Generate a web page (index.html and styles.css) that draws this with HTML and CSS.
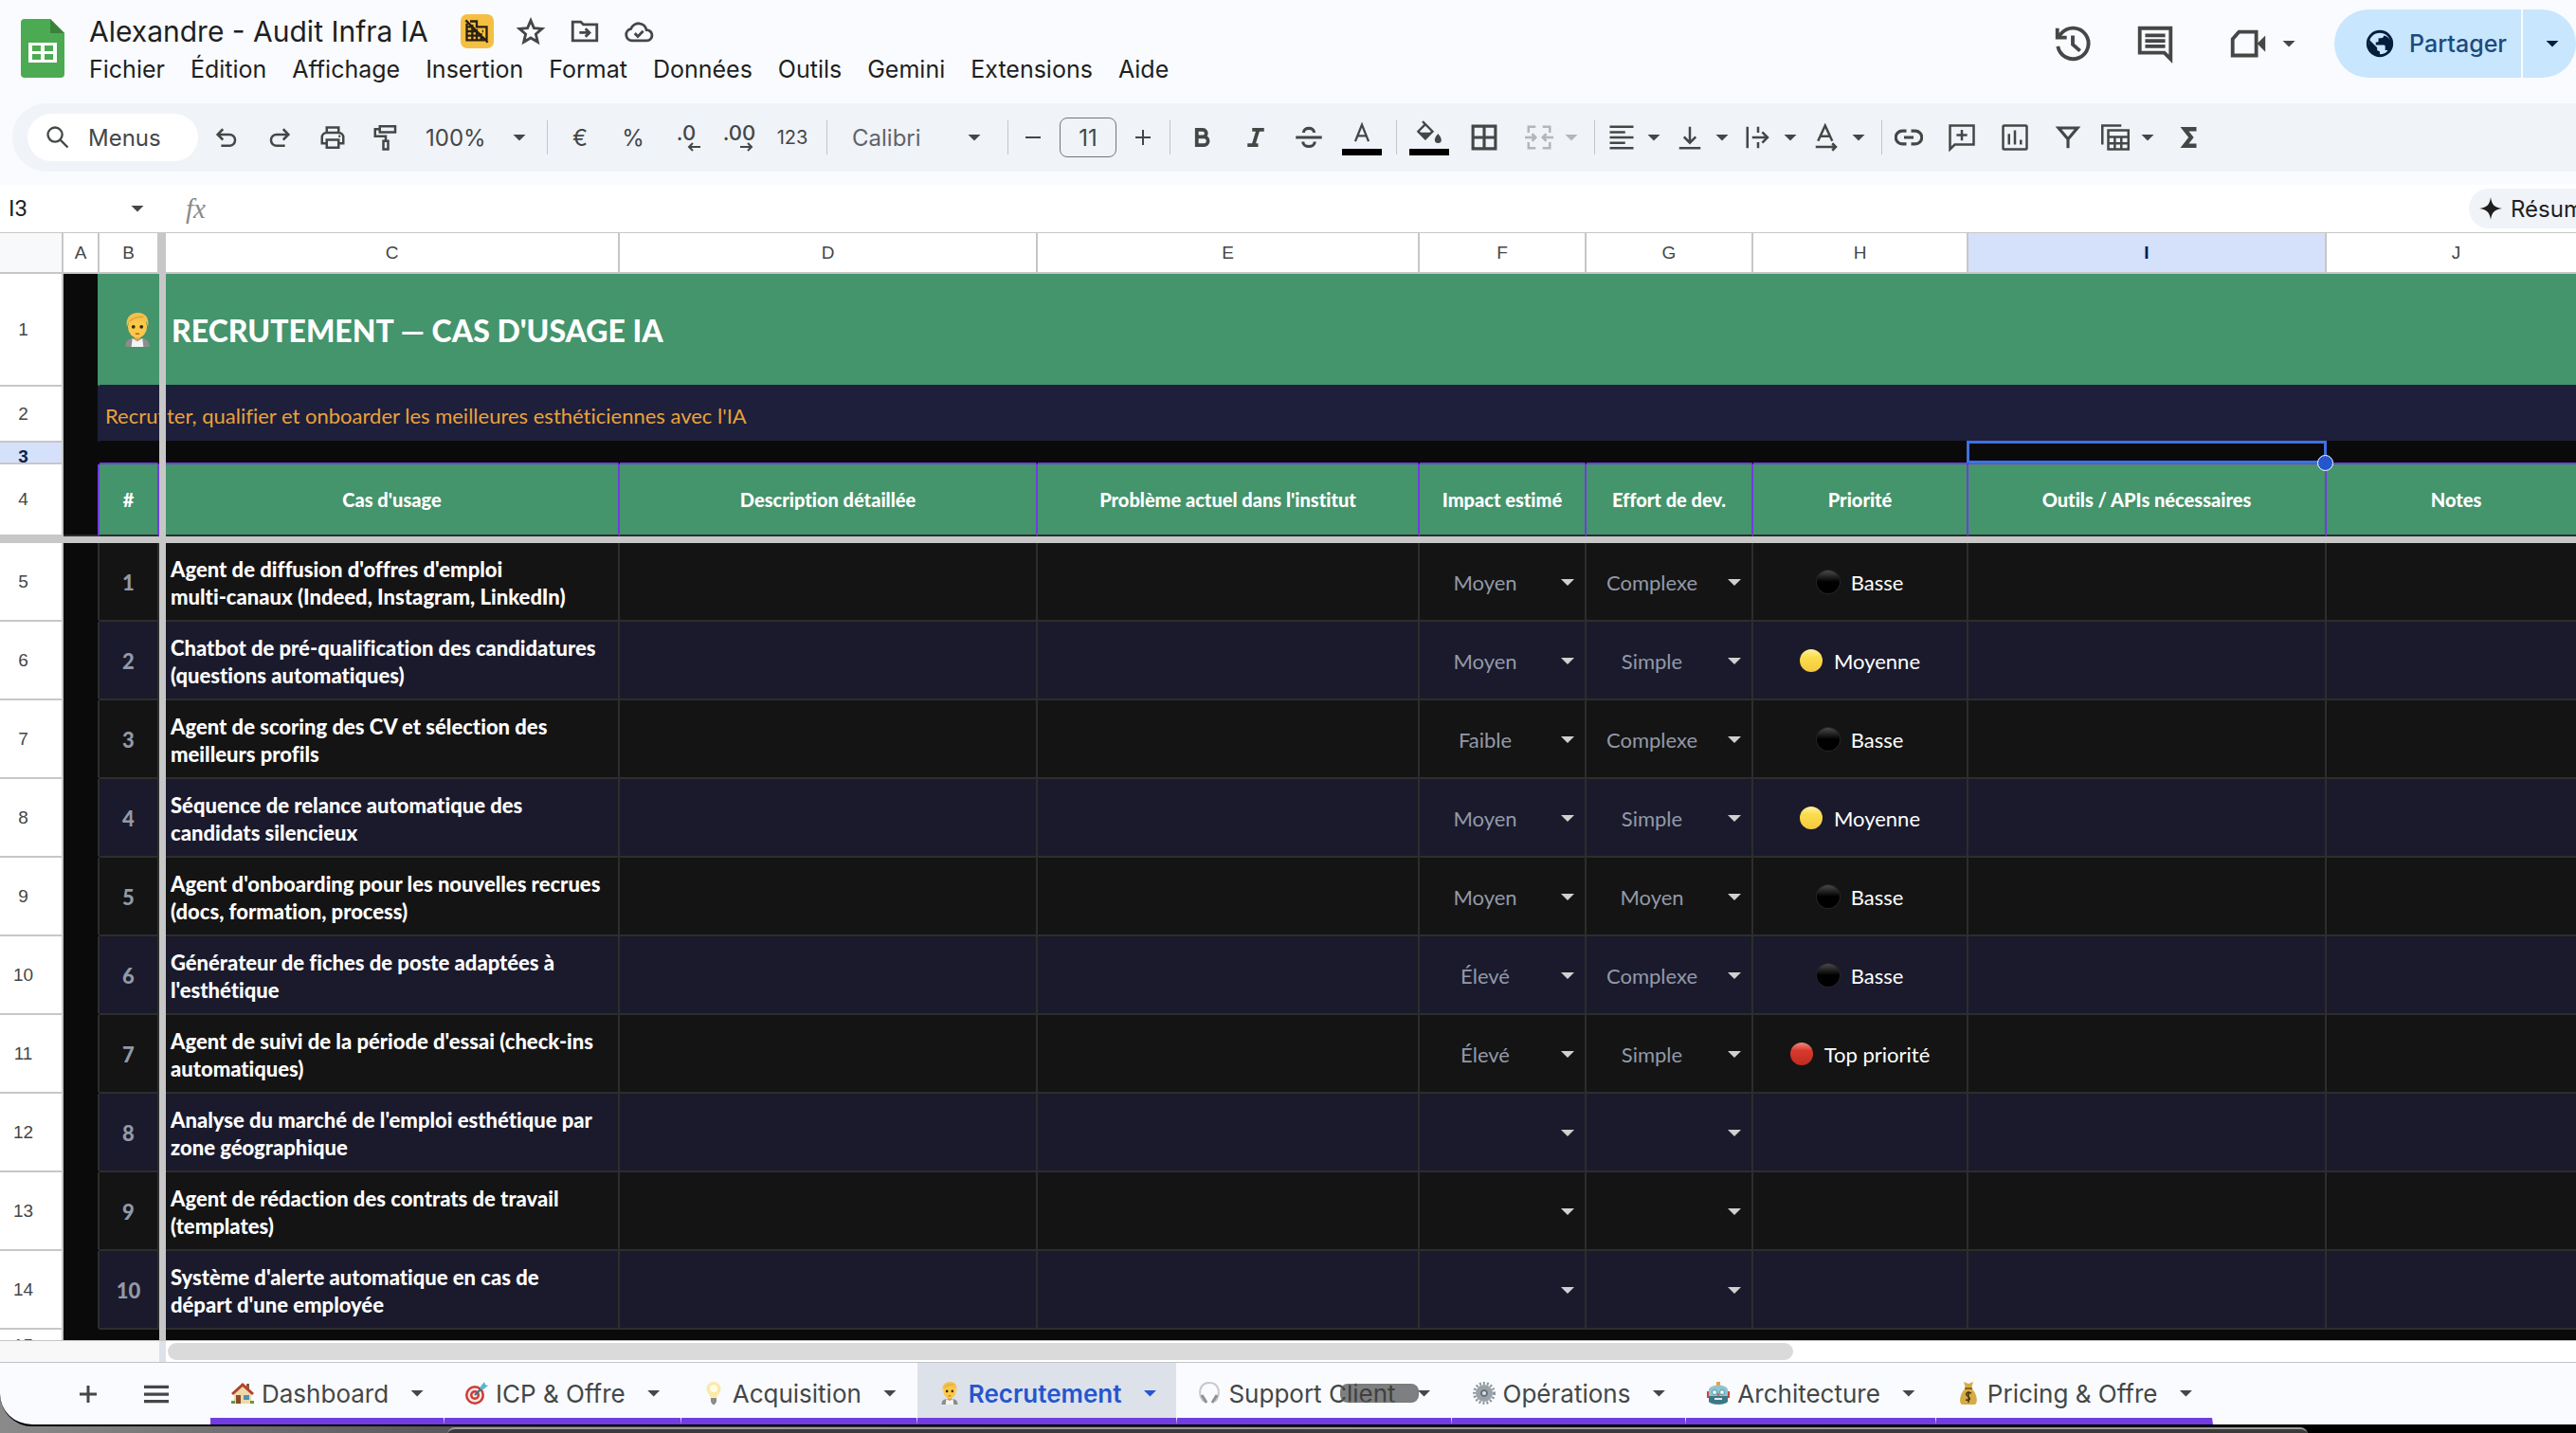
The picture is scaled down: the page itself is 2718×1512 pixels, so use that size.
FILE: index.html
```html
<!DOCTYPE html>
<html lang="fr">
<head>
  <title>Alexandre - Audit Infra IA</title>
  <meta charset="utf-8" />
  <meta name="viewport" content="width=device-width, initial-scale=1.0" />
  <link rel="stylesheet" href="styles.css">
</head>
<body>

<!-- Shared icons -->
<svg class="sprite" aria-hidden="true">
  <symbol id="person" viewBox="0 0 26 34">
    <path d="M1 34c0-6 3-8 8-8.500h8c5 .5 8 2.500 8 8.500z" fill="#8d8d8d"/>
    <path d="M8 25.500l5 3 5-3 1 8.500H7z" fill="#f4f4f4"/>
    <path d="M10 22h6v4l-3 2-3-2z" fill="#e0a23a"/>
    <ellipse cx="13" cy="14" rx="9.500" ry="11" fill="#fbc84a"/>
    <path d="M2.500 14C1 5 6 0 13.500 0 21 0 25 5 23.500 14l-1.500-5c-4 0-7-1-9-3-2 2-5 3-8.500 3z" fill="#f2c14e"/>
    <path d="M5 9c3-4 8-5 14-5" fill="none" stroke="#d99a2b"/>
    <circle cx="9" cy="14" r="1.800" fill="#3a2a1c"/>
    <circle cx="17" cy="14" r="1.800" fill="#3a2a1c"/>
    <path d="M11 21h4" stroke="#b8642a" stroke-width="1.500"/>
  </symbol>
</svg>

<div class="window">

  <header class="header">
    <svg class="logo" viewBox="0 0 46 62">
      <path d="M4 0h27l15 15v43a4 4 0 0 1-4 4H4a4 4 0 0 1-4-4V4a4 4 0 0 1 4-4z" fill="#4caa53"/>
      <path d="M31 0l15 15H31z" fill="#3a8139"/>
      <path d="M8 25h30v21H8z" fill="#fff"/>
      <path d="M12 28h9v6h-9zm13 0h9v6h-9zM12 37h9v6h-9zm13 0h9v6h-9z" fill="#4caa53"/>
    </svg>
    <div class="heading">
      <div class="title-row">
        <h1>Alexandre - Audit Infra IA</h1>
        <button class="badge" aria-label="Externe">
          <svg viewBox="0 0 24 24" width="28" height="28" fill="none" stroke="#2a2111" stroke-width="2"><path d="M3 5v15h16M6 3h6v5h9v12M3 8h5M3 12h9M3 16h14M8 6v14M12 10v10M16 14v6M17 12h1M2 2l20 20"/></svg>
        </button>
        <button class="icon" aria-label="Suivre">
          <svg viewBox="0 0 24 24" width="34" height="34"><path d="M12 4l2.400 5.600 6 .5-4.600 4 1.400 5.900L12 16.900 6.800 20l1.400-5.900-4.600-4 6-.5z"/></svg>
        </button>
        <button class="icon" aria-label="Déplacer">
          <svg viewBox="0 0 24 24" width="34" height="34"><path d="M3 5h6l2 2h10v12H3zM8 13h7M12.500 10l3 3-3 3"/></svg>
        </button>
        <button class="icon" aria-label="Enregistré">
          <svg viewBox="0 0 24 24" width="34" height="34"><path d="M7 19a4.500 4.500 0 0 1-.8-8.900A6 6 0 0 1 17.700 11 4 4 0 0 1 18 19zM9 13.500l2.300 2.300 4-4"/></svg>
        </button>
      </div>
      <nav class="menus">
        <a href="#">Fichier</a>
        <a href="#">Édition</a>
        <a href="#">Affichage</a>
        <a href="#">Insertion</a>
        <a href="#">Format</a>
        <a href="#">Données</a>
        <a href="#">Outils</a>
        <a href="#">Gemini</a>
        <a href="#">Extensions</a>
        <a href="#">Aide</a>
      </nav>
    </div>
    <div class="actions">
      <button class="icon" aria-label="Historique">
        <svg viewBox="0 0 24 24" width="46" height="46"><path d="M3.800 13.500a8.500 8.500 0 1 0 2-7.200L3.500 8.500M3.500 3.500v5.200h5.200M12 7.500v5l4 3.500"/></svg>
      </button>
      <button class="icon" aria-label="Commentaires">
        <svg viewBox="0 0 24 24" width="46" height="46"><path d="M3.500 3.500h17v17l-3.500-3.500H3.500zM6.500 7.500h11M6.500 10.500h11M6.500 13.500h11"/></svg>
      </button>
      <button class="icon meet" aria-label="Meet">
        <svg viewBox="0 0 24 24" width="46" height="46"><path d="M7 5.500h9.500v13H3.500V9.500z"/><path d="M17 12l4.500-4.500v9z" fill="#444746" stroke="none"/></svg>
        <i class="caret"></i>
      </button>
      <div class="share">
        <button class="share-main">
          <svg viewBox="0 0 24 24" width="34" height="34"><circle cx="12" cy="12" r="9" fill="none" stroke="#041e3c" stroke-width="2"/><path d="M4 9l6 6v2l2 1v3c-5 0-9-4-8-12zM15 4v2c0 1-1 2-2 2h-2v2c0 1-1 1-2 1v2h6c1 0 1 1 1 1v3h1c1 0 2 1 2 2 3-4 3-11-4-13z" fill="#041e3c"/></svg>
          Partager
        </button>
        <button class="share-more" aria-label="Options de partage"><i class="caret"></i></button>
      </div>
    </div>
  </header>

  <div class="toolbar">
    <label class="search">
      <svg viewBox="0 0 24 24" width="28" height="28"><circle cx="9.500" cy="9.500" r="6.500"/><path d="M14.500 14.500L21 21"/></svg>
      <input type="text" placeholder="Menus">
    </label>

    <div class="group">
      <button class="tool" aria-label="Annuler"><svg viewBox="0 0 24 24"><path d="M7.500 19h7a4.700 4.700 0 0 0 0-9.500H5M9 5L4.500 9.500 9 14"/></svg></button>
      <button class="tool" aria-label="Rétablir"><svg viewBox="0 0 24 24"><path d="M16.500 19h-7a4.700 4.700 0 0 1 0-9.500H19M15 5l4.500 4.500L15 14"/></svg></button>
      <button class="tool" aria-label="Imprimer"><svg viewBox="0 0 24 24"><path d="M7 8V3.500h10V8M7 17H3v-5a4 4 0 0 1 4-4h10a4 4 0 0 1 4 4v5h-4M7 14h10v6.500H7zM17 11h1.500"/></svg></button>
      <button class="tool" aria-label="Copier la mise en forme"><svg viewBox="0 0 24 24"><path d="M7 2.500h13v5H7zM7 5H3v6h9v4M10 15h4v7h-4z"/></svg></button>
      <button class="zoom">100% <i class="caret"></i></button>
    </div>

    <div class="group">
      <button class="tool">€</button>
      <button class="tool">%</button>
      <button class="tool decimals"><b>.0</b><svg viewBox="0 0 14 10"><path d="M14 5H2M6 1L2 5l4 4"/></svg></button>
      <button class="tool decimals"><b>.00</b><svg viewBox="0 0 14 10"><path d="M0 5h12M8 1l4 4-4 4"/></svg></button>
      <button class="tool formats">123</button>
    </div>

    <div class="group">
      <button class="font">Calibri <i class="caret"></i></button>
    </div>

    <div class="group size">
      <button class="step" aria-label="Réduire"><svg viewBox="0 0 24 24"><path d="M4 12h16"/></svg></button>
      <input type="text" value="11" aria-label="Taille de police">
      <button class="step" aria-label="Augmenter"><svg viewBox="0 0 24 24"><path d="M4 12h16M12 4v16"/></svg></button>
    </div>

    <div class="group">
      <button class="tool" aria-label="Gras"><svg viewBox="0 0 24 24"><path d="M7 5.500h5a3 3 0 0 1 0 6H7zM7 11.500h6a3.500 3.500 0 0 1 0 7H7z" stroke-width="3"/></svg></button>
      <button class="tool" aria-label="Italique"><svg viewBox="0 0 24 24"><path d="M9 5.500h10M5 18.500h9M14 5.500l-4 13" stroke-width="3"/></svg></button>
      <button class="tool" aria-label="Barré"><svg viewBox="0 0 24 24"><path d="M1 12h22M7.500 8c0-5 9-5 9 0M7 15.500c0 5.500 10 5.500 10 0" stroke-width="2.500"/></svg></button>
      <button class="tool swatch" aria-label="Couleur du texte"><svg viewBox="0 0 24 24"><path d="M6 19L12 4l6 15M8 14h8"/></svg></button>
    </div>

    <div class="group">
      <button class="tool swatch" aria-label="Remplissage"><svg viewBox="0 0 24 24"><path d="M6 1l9 9-6.500 6.500L2 10l6.500-6.500"/><path d="M2 11h13l-6.500 6.500zM20 12s3 3.500 3 5.500a3 3 0 0 1-6 0c0-2 3-5.500 3-5.500z" fill="#444746" stroke="none"/></svg></button>
      <button class="tool" aria-label="Bordures"><svg viewBox="0 0 24 24"><path d="M2.500 2.500h19v19h-19zM12 2.500v19M2.500 12h19" stroke-width="2.500"/></svg></button>
      <button class="split merge" aria-label="Fusionner"><svg viewBox="0 0 24 24"><path d="M9 3H3v5M15 3h6v5M9 21H3v-5M15 21h6v-5M0 12h9M6 9l3 3-3 3M24 12h-9M18 9l-3 3 3 3"/></svg><i class="caret"></i></button>
    </div>

    <div class="group">
      <button class="split" aria-label="Alignement horizontal"><svg viewBox="0 0 24 24"><path d="M2 3h20M2 7.500h13M2 12h20M2 16.500h13M2 21h20"/></svg><i class="caret"></i></button>
      <button class="split" aria-label="Alignement vertical"><svg viewBox="0 0 24 24"><path d="M3 21h18M12 3v13M7 11.500l5 5 5-5"/></svg><i class="caret"></i></button>
      <button class="split" aria-label="Retour à la ligne"><svg viewBox="0 0 24 24"><path d="M3 3v18M12 3v5M12 16v5M7 12h13M15.500 7.500L20 12l-4.500 4.500"/></svg><i class="caret"></i></button>
      <button class="split" aria-label="Rotation"><svg viewBox="0 0 24 24"><path d="M5 15L11 2l6 13M7 11h8M3 20h17M17 17l3 3-3 3"/></svg><i class="caret"></i></button>
    </div>

    <div class="group last">
      <button class="tool" aria-label="Lien"><svg viewBox="0 0 24 24"><path d="M10 6.500H6.500a5.500 5.500 0 0 0 0 11H10M14 6.500h3.500a5.500 5.500 0 0 1 0 11H14M8 12h8" stroke-width="2.500"/></svg></button>
      <button class="tool" aria-label="Commentaire"><svg viewBox="0 0 24 24"><path d="M2 22V2h20v16H6zM12 5.500v9M7.500 10h9"/></svg></button>
      <button class="tool" aria-label="Graphique"><svg viewBox="0 0 24 24"><rect x="2" y="2" width="20" height="20" rx="1"/><path d="M7 9v9M12 6v12M17 14v4"/></svg></button>
      <button class="tool" aria-label="Filtre"><svg viewBox="0 0 24 24"><path d="M4 4h16l-8 9.500zM12 12v9" stroke-width="2.500"/></svg></button>
      <button class="split" aria-label="Tableaux"><svg viewBox="0 0 24 24"><path d="M1 18V2h16M6 6h17v16H6zM6 11.500h17M6 17h17M11.500 11.500V22M17 11.500V22"/></svg><i class="caret"></i></button>
      <button class="tool" aria-label="Fonctions"><svg viewBox="0 0 24 24"><path d="M18 5H8l5.500 7L8 19h10" stroke-width="3.500"/></svg></button>
    </div>
  </div>

  <div class="formula-bar">
    <button class="cell-name">I3 <i class="caret"></i></button>
    <span class="fx">fx</span>
    <input type="text" class="formula" aria-label="Formule">
    <button class="summary"><svg viewBox="0 0 24 24" width="24" height="24"><path d="M12 0c1 8 4 11 12 12-8 1-11 4-12 12-1-8-4-11-12-12 8-1 11-4 12-12z" fill="#1f1f1f"/></svg>Résumer</button>
  </div>

  <main class="grid">
    <table>
      <colgroup>
        <col class="w-head"><col class="w-a"><col class="w-b"><col class="w-c"><col class="w-d"><col class="w-e">
        <col class="w-f"><col class="w-f"><col class="w-h"><col class="w-i"><col class="w-j">
      </colgroup>
      <thead>
        <tr class="letters">
          <th class="corner"></th><th>A</th><th>B</th><th class="c">C</th><th>D</th><th>E</th><th>F</th><th>G</th><th>H</th><th class="active">I</th><th>J</th>
        </tr>
      </thead>
      <tbody>
        <tr class="banner">
          <th>1</th><td class="a"></td>
          <td class="emoji"><svg width="28" height="36"><use href="#person"/></svg></td>
          <td colspan="8" class="banner-text">RECRUTEMENT — CAS D'USAGE IA</td>
        </tr>
        <tr class="subtitle">
          <th>2</th><td class="a"></td>
          <td>Recrut</td>
          <td colspan="8" class="rest">ter, qualifier et onboarder les meilleures esthéticiennes avec l'IA</td>
        </tr>
        <tr class="spacer">
          <th class="active">3</th><td class="a"></td><td></td><td></td><td></td><td></td><td></td><td></td><td></td>
          <td class="selected"><div class="selection"><i></i></div></td><td></td>
        </tr>
        <tr class="labels">
          <th>4</th><td class="a"></td>
          <td>#</td><td class="c">Cas d'usage</td><td>Description détaillée</td><td>Problème actuel dans l'institut</td><td>Impact estimé</td><td>Effort de dev.</td><td>Priorité</td><td>Outils / APIs nécessaires</td><td>Notes</td>
        </tr>
        <tr class="freeze-row"><td colspan="11"></td></tr>

        <tr class="row">
          <th>5</th><td class="a"></td><td class="num">1</td>
          <td class="case">Agent de diffusion d'offres d'emploi<br>multi-canaux (Indeed, Instagram, LinkedIn)</td><td></td><td></td>
          <td><div class="pick"><select aria-label="Impact 1"><option>Moyen</option><option>Faible</option><option>Élevé</option></select><i class="caret"></i></div></td>
          <td><div class="pick"><select aria-label="Effort 1"><option>Complexe</option><option>Moyen</option><option>Simple</option></select><i class="caret"></i></div></td>
          <td class="prio"><i class="dot low"></i>Basse</td><td></td><td></td>
        </tr>
        <tr class="row alt">
          <th>6</th><td class="a"></td><td class="num">2</td>
          <td class="case">Chatbot de pré-qualification des candidatures<br>(questions automatiques)</td><td></td><td></td>
          <td><div class="pick"><select aria-label="Impact 2"><option>Moyen</option><option>Faible</option><option>Élevé</option></select><i class="caret"></i></div></td>
          <td><div class="pick"><select aria-label="Effort 2"><option>Simple</option><option>Moyen</option><option>Complexe</option></select><i class="caret"></i></div></td>
          <td class="prio"><i class="dot mid"></i>Moyenne</td><td></td><td></td>
        </tr>
        <tr class="row">
          <th>7</th><td class="a"></td><td class="num">3</td>
          <td class="case">Agent de scoring des CV et sélection des<br>meilleurs profils</td><td></td><td></td>
          <td><div class="pick"><select aria-label="Impact 3"><option>Faible</option><option>Moyen</option><option>Élevé</option></select><i class="caret"></i></div></td>
          <td><div class="pick"><select aria-label="Effort 3"><option>Complexe</option><option>Moyen</option><option>Simple</option></select><i class="caret"></i></div></td>
          <td class="prio"><i class="dot low"></i>Basse</td><td></td><td></td>
        </tr>
        <tr class="row alt">
          <th>8</th><td class="a"></td><td class="num">4</td>
          <td class="case">Séquence de relance automatique des<br>candidats silencieux</td><td></td><td></td>
          <td><div class="pick"><select aria-label="Impact 4"><option>Moyen</option><option>Faible</option><option>Élevé</option></select><i class="caret"></i></div></td>
          <td><div class="pick"><select aria-label="Effort 4"><option>Simple</option><option>Moyen</option><option>Complexe</option></select><i class="caret"></i></div></td>
          <td class="prio"><i class="dot mid"></i>Moyenne</td><td></td><td></td>
        </tr>
        <tr class="row">
          <th>9</th><td class="a"></td><td class="num">5</td>
          <td class="case">Agent d'onboarding pour les nouvelles recrues<br>(docs, formation, process)</td><td></td><td></td>
          <td><div class="pick"><select aria-label="Impact 5"><option>Moyen</option><option>Faible</option><option>Élevé</option></select><i class="caret"></i></div></td>
          <td><div class="pick"><select aria-label="Effort 5"><option>Moyen</option><option>Simple</option><option>Complexe</option></select><i class="caret"></i></div></td>
          <td class="prio"><i class="dot low"></i>Basse</td><td></td><td></td>
        </tr>
        <tr class="row alt">
          <th>10</th><td class="a"></td><td class="num">6</td>
          <td class="case">Générateur de fiches de poste adaptées à<br>l'esthétique</td><td></td><td></td>
          <td><div class="pick"><select aria-label="Impact 6"><option>Élevé</option><option>Moyen</option><option>Faible</option></select><i class="caret"></i></div></td>
          <td><div class="pick"><select aria-label="Effort 6"><option>Complexe</option><option>Moyen</option><option>Simple</option></select><i class="caret"></i></div></td>
          <td class="prio"><i class="dot low"></i>Basse</td><td></td><td></td>
        </tr>
        <tr class="row">
          <th>11</th><td class="a"></td><td class="num">7</td>
          <td class="case">Agent de suivi de la période d'essai (check-ins<br>automatiques)</td><td></td><td></td>
          <td><div class="pick"><select aria-label="Impact 7"><option>Élevé</option><option>Moyen</option><option>Faible</option></select><i class="caret"></i></div></td>
          <td><div class="pick"><select aria-label="Effort 7"><option>Simple</option><option>Moyen</option><option>Complexe</option></select><i class="caret"></i></div></td>
          <td class="prio"><i class="dot top"></i>Top priorité</td><td></td><td></td>
        </tr>
        <tr class="row alt">
          <th>12</th><td class="a"></td><td class="num">8</td>
          <td class="case">Analyse du marché de l'emploi esthétique par<br>zone géographique</td><td></td><td></td>
          <td><div class="pick"><select aria-label="Impact 8"><option></option><option>Moyen</option></select><i class="caret"></i></div></td>
          <td><div class="pick"><select aria-label="Effort 8"><option></option><option>Moyen</option></select><i class="caret"></i></div></td>
          <td></td><td></td><td></td>
        </tr>
        <tr class="row">
          <th>13</th><td class="a"></td><td class="num">9</td>
          <td class="case">Agent de rédaction des contrats de travail<br>(templates)</td><td></td><td></td>
          <td><div class="pick"><select aria-label="Impact 9"><option></option><option>Moyen</option></select><i class="caret"></i></div></td>
          <td><div class="pick"><select aria-label="Effort 9"><option></option><option>Moyen</option></select><i class="caret"></i></div></td>
          <td></td><td></td><td></td>
        </tr>
        <tr class="row alt">
          <th>14</th><td class="a"></td><td class="num">10</td>
          <td class="case">Système d'alerte automatique en cas de<br>départ d'une employée</td><td></td><td></td>
          <td><div class="pick"><select aria-label="Impact 10"><option></option><option>Moyen</option></select><i class="caret"></i></div></td>
          <td><div class="pick"><select aria-label="Effort 10"><option></option><option>Moyen</option></select><i class="caret"></i></div></td>
          <td></td><td></td><td></td>
        </tr>
        <tr class="tail"><th>15</th><td class="a" colspan="10"></td></tr>
      </tbody>
    </table>
    <div class="freeze-col"></div>
  </main>

  <div class="scrollbar">
    <div class="scroll-head"></div>
    <div class="scroll-track"><div class="thumb"></div></div>
  </div>

  <footer class="tabs">
    <button class="tab-tool" aria-label="Ajouter"><svg viewBox="0 0 24 24" width="24" height="24"><path d="M3 12h18M12 3v18"/></svg></button>
    <button class="tab-tool" aria-label="Toutes les feuilles"><svg viewBox="0 0 24 24" width="26" height="26"><path d="M0 5h24M0 12h24M0 19h24"/></svg></button>
    <div class="tab-list">
      <button class="tab">
        <svg viewBox="0 0 24 24"><path d="M3 12v11h18V12l-9-8z" fill="#eed9a6"/><path d="M16 2h3v6l-3-3z" fill="#8b5a3c"/><path d="M0 12L12 1l12 11-2 2L12 5 2 14z" fill="#b5402f"/><path d="M5 14h5v9H5z" fill="#8a4b2a"/><path d="M13 14h6v5h-6z" fill="#4f8fc4"/><path d="M0 20h4v3H0zM20 20h4v3h-4z" fill="#5d9b45"/></svg>
        Dashboard <i class="caret"></i>
      </button>
      <button class="tab">
        <svg viewBox="0 0 24 24"><circle cx="10" cy="14" r="10" fill="#cf3b35"/><circle cx="10" cy="14" r="7.500" fill="#f3e8e4"/><circle cx="10" cy="14" r="5" fill="#cf3b35"/><circle cx="10" cy="14" r="2.500" fill="#f3e8e4"/><path d="M10 14l9-9" stroke="#3f6f86" stroke-width="2"/><path d="M16 5l4-5 1 3 3 1-5 4-3 0z" fill="#58b5cf"/></svg>
        ICP &amp; Offre <i class="caret"></i>
      </button>
      <button class="tab">
        <svg viewBox="0 0 24 24"><path d="M12 0a7.500 7.500 0 0 1 7.500 7.500c0 4-3.500 5-4 9h-7c-.5-4-4-5-4-9A7.500 7.500 0 0 1 12 0z" fill="#fbe9a6"/><circle cx="12" cy="7" r="4" fill="#fffbe6"/><path d="M9 17h6v4l-2 3h-2l-2-3z" fill="#8b8b8b"/></svg>
        Acquisition <i class="caret"></i>
      </button>
      <button class="tab current">
        <svg><use href="#person"/></svg>
        Recrutement <i class="caret"></i>
      </button>
      <button class="tab marked">
        <svg viewBox="0 0 24 24" fill="none"><path d="M6 21C-1 12 2 1 12 1s13 11 6 20" stroke="#c9c9cb" stroke-width="2"/><path d="M4 14l5 8M20 14l-5 8" stroke="#8f9093" stroke-width="3"/></svg>
        Support Client <i class="caret"></i>
      </button>
      <button class="tab">
        <svg viewBox="0 0 24 24" fill="none"><circle cx="12" cy="12" r="10.500" stroke="#8f979e" stroke-width="3" stroke-dasharray="2 2"/><circle cx="12" cy="12" r="6.500" fill="#c3c9ce" stroke="#9aa2a9" stroke-width="5"/><circle cx="12" cy="12" r="4" fill="#6a7279"/><circle cx="12" cy="12" r="2" fill="#dfe3e6"/></svg>
        Opérations <i class="caret"></i>
      </button>
      <button class="tab">
        <svg viewBox="0 0 24 24"><path d="M10 0h4v5h-4z" fill="#f0a03c"/><path d="M0 10h4v7H0zM20 10h4v7h-4z" fill="#c6463d"/><path d="M2 8c2-6 18-6 20 0v12c0 5-20 5-20 0z" fill="#8fc3cd"/><path d="M2 15h20v5c0 5-20 5-20 0z" fill="#3b7885"/><circle cx="8" cy="11" r="2.500" fill="#e9fbff" stroke="#4d98a8"/><circle cx="16" cy="11" r="2.500" fill="#e9fbff" stroke="#4d98a8"/><path d="M10.500 14.500l1.500-3 1.500 3z" fill="#d23c34"/><path d="M8 17h8v2H8z" fill="#e8e8e8"/></svg>
        Architecture <i class="caret"></i>
      </button>
      <button class="tab">
        <svg viewBox="0 0 24 24"><path d="M7 0l5 2 5-2-2 7c6 4 8 17 3 17H6C1 24 3 11 9 7z" fill="#d6ab45"/><path d="M8 6h8v2H8z" fill="#8d6420"/><path d="M15 12c-5-2-7 1-4 3s4 5-2 4M12 10v12" fill="none" stroke="#4b3512" stroke-width="1.500"/></svg>
        Pricing &amp; Offre <i class="caret"></i>
      </button>
    </div>
  </footer>
</div>

<div class="desktop"><div class="behind"></div></div>

</body>
</html>
```
FILE: styles.css
```css
* {
  box-sizing: border-box;
}

body {
  margin: 0;
  height: 100vh;
  display: flex;
  flex-direction: column;
  overflow: hidden;
  background: linear-gradient(90deg, #8a8a8a 0, #555 500px, #000 2000px);
  font-family: Inter, 'Liberation Sans', sans-serif;
  font-size: 24px;
  color: #1f1f1f;
}

button, input, select {
  font: inherit;
  color: inherit;
  background: none;
  border: 0;
  padding: 0;
  margin: 0;
}

svg {
  display: block;
  flex: none;
}

.sprite {
  width: 0;
  height: 0;
  position: absolute;
}

.window {
  flex: 1;
  min-height: 0;
  display: flex;
  flex-direction: column;
  overflow: hidden;
  background: #f9fbfe;
  border-bottom: 2px solid #000;
  border-bottom-left-radius: 34px;
}

.caret {
  flex: none;
  width: 14px;
  height: 7px;
  background: currentColor;
  clip-path: polygon(0 0, 100% 0, 50% 100%);
}

/* header */
.header {
  display: flex;
  height: 109px;
  padding: 10px 0 0 22px;
}

.logo {
  width: 46px;
  height: 62px;
  margin-top: 10px;
}

.heading {
  margin-left: 26px;
}

.title-row {
  display: flex;
  align-items: center;
  height: 46px;
}

h1 {
  margin: 0;
  font-size: 30px;
  font-weight: 400;
}

.badge {
  display: flex;
  align-items: center;
  justify-content: center;
  width: 35px;
  height: 36px;
  margin: 0 22px 0 34px;
  border-radius: 7px;
  background: #f4bf42;
}

.icon svg {
  fill: none;
  stroke: #444746;
  stroke-width: 2;
}

.title-row .icon {
  margin-right: 23px;
}

.menus {
  display: flex;
  gap: 27px;
  font-size: 25px;
  line-height: 34px;
}

.menus a {
  color: inherit;
  text-decoration: none;
}

.actions {
  display: flex;
  align-items: center;
  height: 72px;
  margin-left: auto;
  color: #444746;
}

.actions .icon {
  display: flex;
  align-items: center;
  margin-right: 41px;
}

.actions .meet {
  gap: 13px;
  margin-left: 11px;
}

.share {
  display: flex;
  height: 72px;
  border-radius: 36px;
  overflow: hidden;
  background: #c8e6fd;
}

.share-main {
  display: flex;
  align-items: center;
  gap: 14px;
  padding: 0 15px 0 31px;
  font-size: 25px;
  font-weight: 500;
  color: #1c4a7e;
  border-right: 2px solid #f9fbfe;
}

.share-more {
  width: 56px;
  padding-left: 24px;
  color: #041e3c;
}

.share-more .caret {
  display: block;
}

/* toolbar */
.toolbar {
  display: flex;
  align-items: center;
  height: 72px;
  margin: 0 0 14px 13px;
  padding-left: 16px;
  border-radius: 36px 0 0 36px;
  background: #f0f3f8;
  color: #444746;
}

.toolbar svg {
  fill: none;
  stroke: #444746;
  stroke-width: 2;
}

.search {
  display: flex;
  align-items: center;
  gap: 18px;
  width: 180px;
  height: 50px;
  padding-left: 18px;
  border-radius: 25px;
  background: #fff;
}

.search input {
  width: 100px;
}

.search input::placeholder {
  color: #444746;
  opacity: 1;
}

.group {
  display: flex;
  align-items: center;
  height: 36px;
  padding: 0 8px 0 6px;
  border-right: 1px solid #c4c7c5;
}

.search + .group {
  padding-left: 2px;
}

.group.last {
  padding: 0;
  border: 0;
}

.tool {
  display: flex;
  align-items: center;
  justify-content: center;
  width: 56px;
  height: 48px;
}

.tool svg, .split svg {
  width: 30px;
  height: 30px;
}

.zoom, .font {
  display: flex;
  align-items: center;
  justify-content: space-between;
  width: 134px;
  padding: 0 14px;
}

.font {
  width: 176px;
  padding: 0 20px;
  color: #5f6368;
}

.font .caret {
  color: #444746;
}

.decimals {
  flex-direction: column;
  align-items: center;
  font-size: 22px;
  line-height: 20px;
}

.decimals b {
  font-weight: 500;
}

.decimals svg {
  width: 14px;
  height: 10px;
  margin-left: 16px;
}

.formats {
  font-size: 20px;
}

.step {
  display: flex;
  justify-content: center;
  width: 40px;
}

.step svg {
  width: 24px;
  height: 24px;
}

.size input {
  width: 60px;
  height: 42px;
  margin: 0 8px;
  border: 1px solid #747775;
  border-radius: 8px;
  text-align: center;
}

.swatch {
  flex-direction: column;
}

.swatch svg {
  width: 28px;
  height: 28px;
}

.swatch::after {
  content: '';
  width: 42px;
  height: 7px;
  margin-top: 2px;
  background: #000;
}

.swatch + .tool {
  margin-left: 2px;
}

.split {
  display: flex;
  align-items: center;
  justify-content: space-between;
  width: 72px;
  padding: 0 9px 0 7px;
}

.merge {
  margin-left: 8px;
  opacity: .35;
}

/* formula bar */
.formula-bar {
  display: flex;
  align-items: center;
  height: 51px;
  border-bottom: 1px solid #c7c7c7;
  background: #fff;
}

.cell-name {
  display: flex;
  align-items: center;
  justify-content: space-between;
  width: 152px;
  padding-left: 9px;
  font-family: Roboto, sans-serif;
}

.cell-name .caret {
  color: #444746;
}

.fx {
  margin-left: 44px;
  font: italic 29px 'Liberation Serif', serif;
  color: #8a8a8a;
}

.formula {
  flex: 1;
}

.summary {
  display: flex;
  flex: 0 0 113px;
  align-items: center;
  gap: 9px;
  height: 42px;
  padding-left: 11px;
  border-radius: 21px 0 0 21px;
  background: #f0f3f8;
  overflow: hidden;
}

/* sheet */
.grid {
  position: relative;
  flex: 1;
  min-height: 0;
  overflow: hidden;
  background: #0a0a0a;
}

table {
  table-layout: fixed;
  width: 2730px;
  border-collapse: separate;
  border-spacing: 0;
}

.w-head { width: 67px; }
.w-a { width: 38px; }
.w-b { width: 63px; }
.w-c { width: 486px; }
.w-d { width: 441px; }
.w-e { width: 403px; }
.w-f { width: 176px; }
.w-h { width: 227px; }
.w-i { width: 378px; }
.w-j { width: 275px; }

td, th {
  padding: 0;
  border: 0 solid #2d2d2d;
  border-width: 0 2px 2px 0;
  white-space: nowrap;
  overflow: hidden;
  color: #fff;
}

th {
  background: #fff;
  border-color: #c7c7c7;
  font: 19px 'Liberation Sans', sans-serif;
  color: #444746;
}

tbody th {
  padding-right: 16px;
}

.letters th {
  height: 43px;
}

.letters .corner {
  background: #f8f9fb;
}

.letters .active, .spacer .active {
  background: #d5e0fb;
  color: #0b1f4b;
  font-weight: bold;
}

td {
  font-family: Lato, sans-serif;
  font-size: 22px;
  font-variant-ligatures: none;
  text-align: center;
}

.a, .row .a {
  background: #0a0a0a;
}

.c {
  padding-left: 7px;
}

.banner td {
  height: 119px;
  border-color: #1e1f3b;
  border-right: 0;
  background: #44946c;
}

.banner .emoji {
  padding-left: 26px;
}

.banner .banner-text {
  padding: 2px 0 0 13px;
  text-align: left;
  font-size: 32px;
  font-weight: 900;
}

.subtitle td {
  height: 59px;
  padding: 4px 0 0 6px;
  border-color: #0a0a0a;
  border-right: 0;
  background: #1e1f3b;
  text-align: left;
  color: #e8a23a;
}

.subtitle .rest {
  padding-left: 8px;
}

.banner .a, .subtitle .a {
  background: #0a0a0a;
  border-right: 2px solid #44946c;
  border-bottom-color: #0a0a0a;
}

.subtitle .a {
  border-right-color: #1e1f3b;
}

.spacer th {
  height: 23px;
  line-height: 12px;
  vertical-align: bottom;
}

.spacer td {
  border-color: #0a0a0a;
  border-bottom-color: #733ce0;
}

.spacer .a {
  border-bottom-color: #0a0a0a;
}

.spacer .selected {
  position: relative;
  overflow: visible;
}

.selection {
  position: absolute;
  inset: -2px -2px -1px -2px;
  border: 3px solid #3f70e2;
}

.selection i {
  position: absolute;
  z-index: 1;
  right: -10px;
  bottom: -11px;
  width: 17px;
  height: 17px;
  border: 1px solid #fff;
  border-radius: 50%;
  background: #2456cf;
}

.labels td {
  height: 76px;
  border-right-color: #733ce0;
  background: #44946c;
  font-size: 20px;
  font-weight: 900;
}

.labels .a {
  background: #0a0a0a;
}

.freeze-row td {
  height: 7px;
  border: 0;
  background: #c7c7c7;
}

.row td {
  height: 83px;
  padding-top: 2px;
  background: #141414;
}

.alt td {
  background: #1a1a2c;
}

.row .num {
  font-weight: 900;
  color: #9299a8;
}

.row .case {
  padding-left: 12px;
  text-align: left;
  line-height: 29px;
  font-weight: 900;
}

.row .a {
  border-bottom-color: #0a0a0a;
}

.pick {
  display: flex;
  align-items: center;
  padding-right: 11px;
  color: #9299a8;
}

.pick select {
  flex: 1;
  min-width: 0;
  margin-right: 11px;
  appearance: none;
  text-align-last: center;
}

.pick .caret {
  color: #d0d0d0;
}

.dot {
  display: inline-block;
  width: 24px;
  height: 24px;
  margin-right: 12px;
  border-radius: 50%;
  vertical-align: -3px;
}

.low {
  background: linear-gradient(#4a4a4a, #000 50%);
  box-shadow: 0 0 0 1px #262626;
}

.mid {
  background: linear-gradient(#fff0a0, #fbdc4c 35%, #f3c93f);
}

.top {
  background: linear-gradient(#ee8b80, #d8392d 35%, #c22a20);
}

.tail th {
  height: 34px;
  border-bottom: 0;
}

.tail td {
  border: 0;
}

.freeze-col {
  position: absolute;
  top: 0;
  bottom: 0;
  left: 168px;
  width: 7px;
  background: #c7c7c7;
}

/* horizontal scrollbar */
.scrollbar {
  display: flex;
  height: 24px;
  border-top: 1px solid #c7c7c7;
  border-bottom: 1px solid #c0c4c6;
  background: #fff;
}

.scroll-head {
  width: 175px;
  border-right: 7px solid #dde2ea;
  background: #f8f8f8;
}

.scroll-track {
  flex: 1;
  padding: 2px 0 0 2px;
}

.thumb {
  width: 67.5%;
  height: 18px;
  border-radius: 9px;
  background: #dadada;
}

/* sheet tabs */
.tabs {
  display: flex;
  align-items: flex-start;
  height: 65px;
  padding-left: 57px;
  color: #444746;
}

.tab-tool {
  display: flex;
  align-items: center;
  justify-content: center;
  width: 72px;
  height: 65px;
}

.tab-tool svg {
  stroke: currentColor;
  stroke-width: 3;
}

.tab-list {
  display: flex;
  margin-left: 21px;
}

.tab {
  position: relative;
  display: flex;
  align-items: center;
  height: 65px;
  padding: 6px 21px 0 22px;
  border-right: 1px solid #f9fbfe;
  border-bottom: 7px solid #733ce0;
  font-size: 26px;
}

.tab svg {
  width: 24px;
  height: 24px;
  margin-right: 8px;
}

.tab .caret {
  margin-left: 23px;
}

.current {
  background: #dde2ea;
  font-weight: 600;
  color: #2456cf;
}

.marked::after {
  content: '';
  position: absolute;
  top: 22px;
  right: 34px;
  width: 79px;
  height: 16px;
  border: 2px solid rgba(120, 120, 120, .4);
  border-radius: 8px;
  background: rgba(60, 60, 60, .65);
}

/* strip below the window */
.desktop {
  height: 7px;
  padding: 1px 283px 0 472px;
}

.behind {
  height: 8px;
  border-top: 2px solid #9a9a9a;
  border-radius: 16px 16px 0 0;
  background: #3a3a3a;
}
```
